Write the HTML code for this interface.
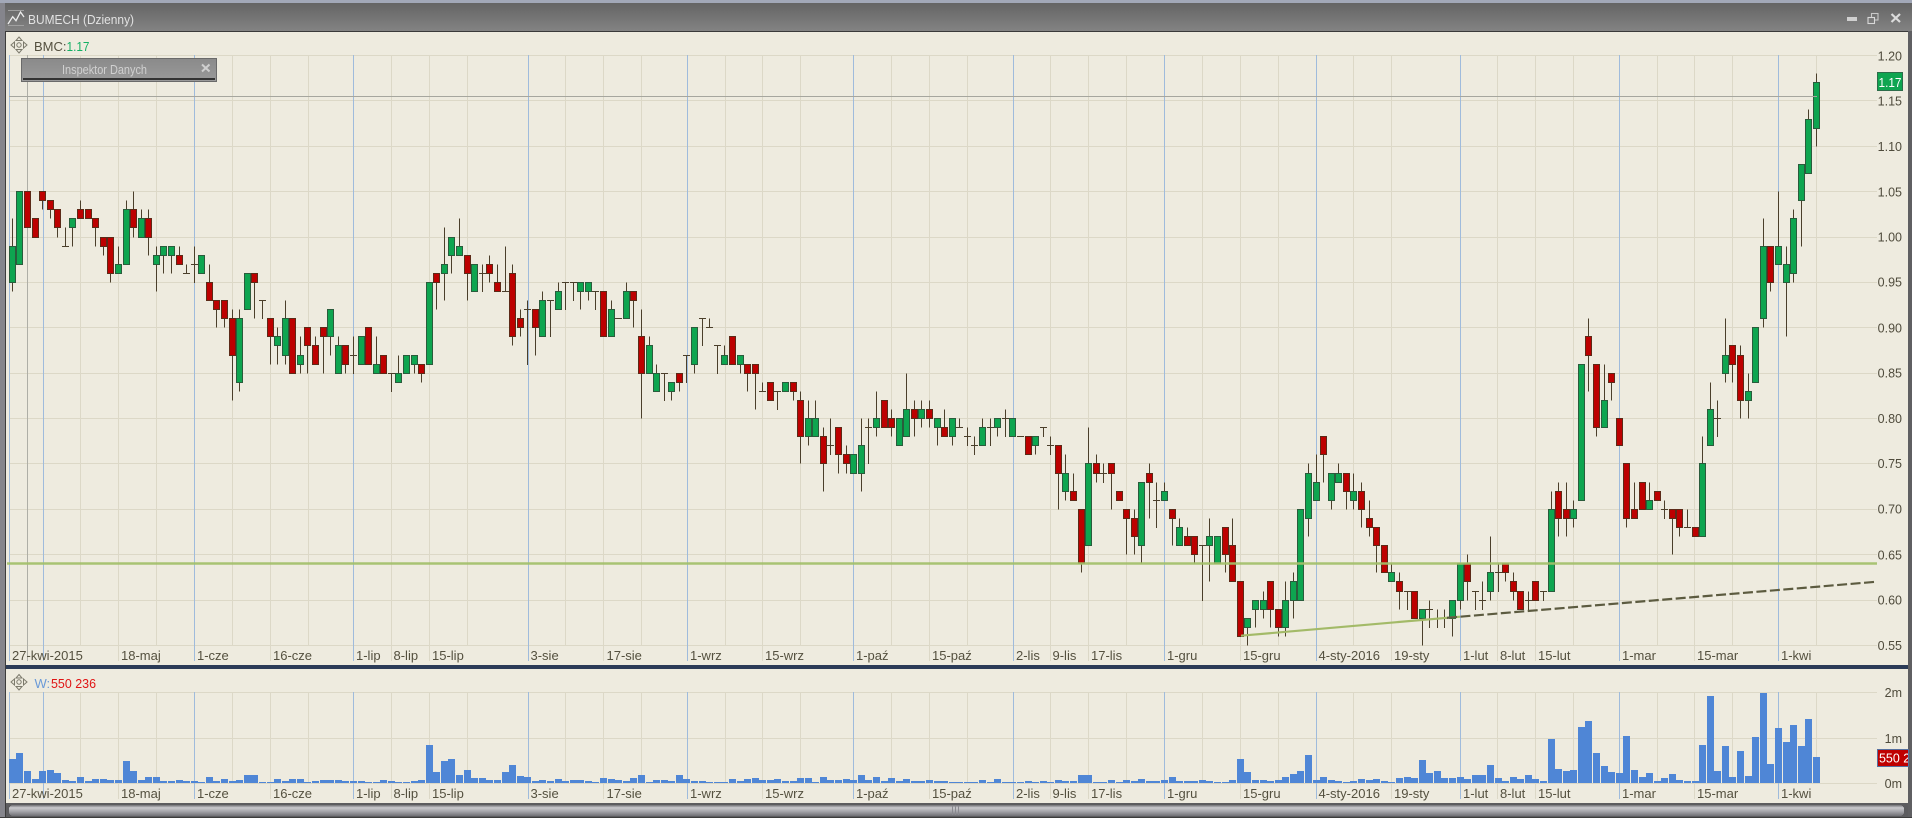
<!DOCTYPE html>
<html lang="pl">
<head>
<meta charset="utf-8">
<title>BUMECH (Dzienny)</title>
<style>
html,body{margin:0;padding:0;background:#6a6a6a;width:1912px;height:818px;overflow:hidden}
svg{display:block}
text{font-family:"Liberation Sans",sans-serif;font-size:13px;fill:#54503f}
.p{font-size:12.5px;text-anchor:end;fill:#4f4b3c}
.w{fill:#ffffff}
</style>
</head>
<body>
<svg xmlns="http://www.w3.org/2000/svg" width="1912" height="818" viewBox="0 0 1912 818" shape-rendering="crispEdges">
<defs>
<linearGradient id="tb" x1="0" y1="0" x2="0" y2="1"><stop offset="0" stop-color="#646464"/><stop offset="1" stop-color="#838383"/></linearGradient>
<linearGradient id="sb" x1="0" y1="0" x2="0" y2="1"><stop offset="0" stop-color="#6f6f73"/><stop offset=".25" stop-color="#c9c9cd"/><stop offset=".55" stop-color="#a9a9ae"/><stop offset="1" stop-color="#707075"/></linearGradient>
<linearGradient id="ib" x1="0" y1="0" x2="0" y2="1"><stop offset="0" stop-color="#8a8a8a"/><stop offset="1" stop-color="#9a9a9a"/></linearGradient>
<clipPath id="rc"><rect x="1877" y="748" width="31" height="20"/></clipPath>
</defs>
<!-- window frame -->
<rect width="1912" height="818" fill="#6a6a6e"/>
<rect x="0" y="0" width="1912" height="3" fill="#a2a8b8"/>
<rect x="0" y="3" width="1912" height="28" fill="url(#tb)"/>
<rect x="0" y="31" width="1912" height="1" fill="#3a3a3a"/>
<rect x="0" y="3" width="5" height="815" fill="#85858c"/>
<rect x="5" y="31" width="1" height="787" fill="#3c3c3c"/>
<rect x="1908" y="31" width="4" height="787" fill="#5f5f62"/>
<rect x="6" y="32" width="1902" height="771" fill="#eeebdf"/>
<!-- pane separator -->
<rect x="6" y="665" width="1902" height="4" fill="#2b3b57"/>
<!-- scrollbar -->
<rect x="6" y="803" width="1902" height="15" fill="#5c5c5f"/>
<rect x="9" y="805" width="1895" height="11" rx="4" fill="url(#sb)"/>
<g fill="#8a8a90"><rect x="952" y="806" width="1" height="9"/><rect x="955" y="806" width="1" height="9"/><rect x="958" y="806" width="1" height="9"/></g>
<rect x="0" y="817" width="1912" height="1" fill="#3c3c3c"/>

<g id="grid"></g>
<g id="vol"></g>
<g id="cand"></g>

<!-- overlay lines -->
<g shape-rendering="auto">
<line x1="9" y1="96.5" x2="1817" y2="96.5" stroke="#a6a69e" stroke-width="1" shape-rendering="crispEdges"/>
<line x1="7" y1="563.5" x2="1877" y2="563.5" stroke="#a3c06a" stroke-width="2.5" opacity=".92"/>
<line x1="1241" y1="635.7" x2="1460" y2="616.7" stroke="#a3ba68" stroke-width="2.2"/>
<line x1="1447" y1="617.8" x2="1877" y2="581.7" stroke="#5c5b40" stroke-width="2.2" stroke-dasharray="10 3.5"/>
</g>

<!-- title bar -->
<g shape-rendering="auto">
<path d="M8 10.5H24M8 25.5H24" stroke="#a0a0a0" stroke-width="1" fill="none"/>
<path d="M8 24L12.7 16.7L16 20.7L20.5 12L24 17" stroke="#eeeeee" stroke-width="1.3" fill="none"/>
<rect x="1847" y="17" width="10" height="4" fill="#d0d0d0"/>
<rect x="1871.5" y="13.5" width="6.5" height="6.5" fill="none" stroke="#c8c8c8" stroke-width="1.1"/>
<rect x="1868" y="17.5" width="6.5" height="6" fill="#7a7a7a" stroke="#d8d8d8" stroke-width="1.1"/>
<path d="M1891.5 14L1900 22M1900 14L1891.5 22" stroke="#dcdcdc" stroke-width="2.2"/>
</g>
<text x="28" y="24" style="fill:#e2e2e2;font-size:13px" textLength="106" lengthAdjust="spacingAndGlyphs">BUMECH (Dzienny)</text>

<!-- pane headers -->
<g fill="none" stroke="#7c7a6c" stroke-width="1" shape-rendering="auto">
<circle cx="19" cy="45" r="2.2"/><path d="M19 37l3 3.5h-6zM19 53l3-3.5h-6zM11 45l3.5-3v6zM27 45l-3.5-3v6z"/>
</g>
<g fill="none" stroke="#7c7a6c" stroke-width="1" shape-rendering="auto">
<circle cx="19" cy="682" r="2.2"/><path d="M19 674.5l3 3.5h-6zM19 690l3-3.5h-6zM11 682l3.5-3v6zM27 682l-3.5-3v6z"/>
</g>
<text x="34" y="51">BMC:</text>
<text x="66.5" y="51" style="fill:#14b064" textLength="23" lengthAdjust="spacingAndGlyphs">1.17</text>
<text x="34.5" y="688" style="fill:#6a9ad8">W:</text>
<text x="51" y="688" style="fill:#e01414" textLength="45" lengthAdjust="spacingAndGlyphs">550 236</text>

<!-- inspector -->
<rect x="21.5" y="58.5" width="195" height="23" fill="url(#ib)" stroke="#6a6a6a" stroke-width="1"/>
<rect x="23" y="78" width="192" height="2" fill="#333333"/>
<text x="62" y="74" style="fill:#d0d0d0;font-size:12.5px" textLength="85" lengthAdjust="spacingAndGlyphs">Inspektor Danych</text>
<path d="M202 64.5L209.5 71.5M209.5 64.5L202 71.5" stroke="#cfcfcf" stroke-width="2" shape-rendering="auto"/>

<!-- price axis -->
<text class="p" x="1902" y="60.5">1.20</text>
<text class="p" x="1902" y="105.5">1.15</text>
<text class="p" x="1902" y="151">1.10</text>
<text class="p" x="1902" y="196.5">1.05</text>
<text class="p" x="1902" y="241.5">1.00</text>
<text class="p" x="1902" y="286.5">0.95</text>
<text class="p" x="1902" y="332.5">0.90</text>
<text class="p" x="1902" y="377.5">0.85</text>
<text class="p" x="1902" y="423">0.80</text>
<text class="p" x="1902" y="468">0.75</text>
<text class="p" x="1902" y="513.5">0.70</text>
<text class="p" x="1902" y="559.5">0.65</text>
<text class="p" x="1902" y="604.5">0.60</text>
<text class="p" x="1902" y="650">0.55</text>
<rect x="1877.5" y="72.5" width="25" height="18" fill="#0ea550" stroke="#2d6c4a"/>
<text class="w" x="1878.5" y="87" textLength="23" lengthAdjust="spacingAndGlyphs">1.17</text>

<!-- volume axis -->
<text class="p" x="1902" y="697">2m</text>
<text class="p" x="1902" y="743">1m</text>
<text class="p" x="1902" y="788">0m</text>
<rect x="1877.5" y="749.5" width="31" height="17" fill="#bf0000" stroke="#56709f"/>
<g clip-path="url(#rc)"><text class="w" x="1879" y="762.5" textLength="45" lengthAdjust="spacingAndGlyphs">550 236</text></g>

<!-- date axis price pane -->
<text x="12" y="660">27-kwi-2015</text>
<text x="121" y="660">18-maj</text>
<text x="197" y="660">1-cze</text>
<text x="273" y="660">16-cze</text>
<text x="356" y="660">1-lip</text>
<text x="393.5" y="660">8-lip</text>
<text x="432" y="660">15-lip</text>
<text x="530.5" y="660">3-sie</text>
<text x="606.5" y="660">17-sie</text>
<text x="690" y="660">1-wrz</text>
<text x="765" y="660">15-wrz</text>
<text x="856" y="660">1-paź</text>
<text x="932" y="660">15-paź</text>
<text x="1016" y="660">2-lis</text>
<text x="1052.5" y="660">9-lis</text>
<text x="1091" y="660">17-lis</text>
<text x="1167" y="660">1-gru</text>
<text x="1243" y="660">15-gru</text>
<text x="1318.5" y="660">4-sty-2016</text>
<text x="1394" y="660">19-sty</text>
<text x="1463" y="660">1-lut</text>
<text x="1500" y="660">8-lut</text>
<text x="1538" y="660">15-lut</text>
<text x="1622" y="660">1-mar</text>
<text x="1697" y="660">15-mar</text>
<text x="1781" y="660">1-kwi</text>

<!-- date axis volume pane -->
<text x="12" y="798">27-kwi-2015</text>
<text x="121" y="798">18-maj</text>
<text x="197" y="798">1-cze</text>
<text x="273" y="798">16-cze</text>
<text x="356" y="798">1-lip</text>
<text x="393.5" y="798">8-lip</text>
<text x="432" y="798">15-lip</text>
<text x="530.5" y="798">3-sie</text>
<text x="606.5" y="798">17-sie</text>
<text x="690" y="798">1-wrz</text>
<text x="765" y="798">15-wrz</text>
<text x="856" y="798">1-paź</text>
<text x="932" y="798">15-paź</text>
<text x="1016" y="798">2-lis</text>
<text x="1052.5" y="798">9-lis</text>
<text x="1091" y="798">17-lis</text>
<text x="1167" y="798">1-gru</text>
<text x="1243" y="798">15-gru</text>
<text x="1318.5" y="798">4-sty-2016</text>
<text x="1394" y="798">19-sty</text>
<text x="1463" y="798">1-lut</text>
<text x="1500" y="798">8-lut</text>
<text x="1538" y="798">15-lut</text>
<text x="1622" y="798">1-mar</text>
<text x="1697" y="798">15-mar</text>
<text x="1781" y="798">1-kwi</text>
</svg>
<script>
(function(){
var NS="http://www.w3.org/2000/svg";
function el(parent,n,a){var e=document.createElementNS(NS,n);for(var k in a)e.setAttribute(k,a[k]);parent.appendChild(e);return e;}
function Y(c){return 55.5+(120-c)*9.077;}
function YP(c){return Math.round(Y(c)-0.5)+0.5;}
function X(i){return Math.round(12.33+7.58*i-0.5)+0.5;}
var grid=document.getElementById("grid"),cand=document.getElementById("cand"),vol=document.getElementById("vol");
var GC="#dcd8c7",BC="#9fbbdc";
var blue=[9.5,43.5,194.5,353.5,528.5,687.5,853.5,1013.5,1164.5,1316.5,1460.5,1619.5,1778.5];
var grey=[80.5,118.5,156.5,232.5,270.5,308.5,391.5,429.5,467.5,565.5,603.5,641.5,725.5,762.5,800.5,891.5,929.5,967.5,1050.5,1088.5,1126.5,1202.5,1240.5,1278.5,1353.5,1391.5,1497.5,1535.5,1573.5,1657.5,1694.5,1732.5,1816.5];
var ticks=[118.5,270.5,391.5,429.5,603.5,762.5,929.5,1050.5,1088.5,1240.5,1391.5,1497.5,1535.5,1694.5];
var i,p;
// horizontal
for(i=0;i<14;i++){p=Math.round(Y(120-5*i)-.5)+.5;el(grid,"line",{x1:9,x2:1877,y1:p,y2:p,stroke:GC});}
[692.5,738.5,783.5].forEach(function(y){el(grid,"line",{x1:9,x2:1877,y1:y,y2:y,stroke:GC});});
// vertical
grey.forEach(function(x){
 el(grid,"line",{x1:x,x2:x,y1:55,y2:645,stroke:GC});
 el(grid,"line",{x1:x,x2:x,y1:692,y2:783,stroke:GC});
});
ticks.forEach(function(x){
 el(grid,"line",{x1:x,x2:x,y1:645,y2:661,stroke:GC});
 el(grid,"line",{x1:x,x2:x,y1:783,y2:799,stroke:GC});
});
blue.forEach(function(x){
 el(grid,"line",{x1:x,x2:x,y1:55,y2:661,stroke:BC});
 el(grid,"line",{x1:x,x2:x,y1:692,y2:799,stroke:BC});
});
el(grid,"line",{x1:27.5,x2:27.5,y1:55,y2:661,stroke:"#aeaea6"});

var data="G99 95 102 94,G105 97,R105 101,R102 100,R105 104 105 103,R104 103 104 102,R103 101 103 100,D99 101 99,G102 101 102 99,R103 102 104 102,R103 102,R102 101 102 99,R100 99 100 98,R100 96 100 95,G97 96 99 96,G103 97 104 97,R103 101 105 100,G102 100 103 100,R102 100 103 98,G98 97 99 94,G99 98 99 96,G99 98 99 96,R98 97 99 97,D96 97 96,D97 99 95,G98 96,R95 93 97 93,R93 92 93 90,R93 91 93 90,R91 87 92 82,G91 84 92 83,G96 92,R96 95 96 91,D93 93 91,R91 89 91 86,G89 88 90 86,G91 87 93 86,R91 85,G87 86 89 85,R90 88 90 85,R88 86 89 86,R90 89 90 85,G92 89 92 87,G88 85 89 85,R88 86 88 85,D87 89 85,G89 86,R90 86,G86 85 89 85,R87 85,D85 85 83,G85 84 87 84,G87 85,G87 86 87 85,R86 85 86 84,G95 86,R96 95 96 92,G97 96 101 93,G100 98 100 96,G99 98 102 98,R98 96 98 93,G97 94,D96 97 94,R97 96 98 95,R95 94 97 94,D94 99 94,R96 89 97 88,R91 90 92 89,D92 93 86,R92 90 92 87,G93 89 94 89,D93 93 89,G94 92 95 92,D95 95 92,D95 95 93,G95 94 95 92,G95 94 95 93,D94 94 92,R94 89,G92 89 93 89,D91 91 91,G94 91 95 91,R94 93 94 90,R89 85 92 80,G88 85 89 85,G85 83 86 83,D85 85 82,G84 83 84 82,R85 84 85 83,D87 87 84,G90 86 90 85,D91 91 88,D90 91 90,D88 88 85,G87 86 88 86,R89 86,G87 86 87 85,R86 85 86 83,R86 85 86 81,D83 84 83,R84 82,D83 83 81,G84 83,R84 83 84 82,R82 78 83 75,G80 78 82 77,G80 78 82 78,R78 75 79 72,D77 80 76,R79 76 79 74,R76 75 77 74,G76 74,G77 74 80 72,D79 80 75,G80 79 83 78,R82 79,R80 79 81 78,G80 77,G81 78 85 78,R81 80 82 78,G81 80 82 79,R81 80 82 79,G80 79 80 77,R79 78 81 78,G80 78 80 77,D79 80 79,D78 79 77,D77 78 76,G79 77 80 77,D79 80 77,G80 79 80 78,D80 81 78,G80 78,D78 78 78,R78 76,G78 77 78 76,D79 79 78,D77 78 76,R77 74 77 70,G74 72 76 71,R72 71 74 71,R70 64 70 63,G75 66 79 66,R75 74 76 73,D74 75 73,R75 74 75 70,R72 71,R70 69 70 65,R69 67 70 65,G73 66 73 64,R74 73 75 69,D71 73 68,G72 71 73 71,R70 69 70 66,G68 66 69 66,R67 66 68 66,R67 65 67 64,D66 66 60,G67 66 69 62,G67 64,R68 65 68 63,R66 62 69 62,R62 56,G58 57 58 55,G60 59 60 57,G60 59 61 58,R62 59 62 57,R59 57 59 56,G60 57 62 56,G62 60 63 58,G70 60,G74 69 75 67,G73 71 76 71,R78 76 78 73,G74 71 74 70,G74 73 75 73,R74 72 74 70,G72 71 74 70,R72 70 73 68,R69 68 71 67,R68 66 68 63,R66 63,G63 62 64 62,R62 61 63 59,D61 61 59,R61 58,G59 58 59 55,D59 60 57,D58 59 57,D58 59 57,G60 58 60 56,G64 60 64 59,R64 62 65 60,D61 61 59,D60 62 59,G63 61 67 60,D63 64 61,R64 63 64 62,R62 61 63 60,R61 59,D60 61 59,R62 60,D61 61 60,G70 61 72 61,R72 69 73 67,R70 69 73 67,G70 69 71 68,G86 71,R89 87 91 83,R86 79 86 78,G82 79 86 79,R85 84 85 82,R80 77,R75 69 75 68,R70 69 73 69,R73 70,G71 70 73 70,R72 71,D70 71 69,R70 69 70 65,R70 68 70 67,D68 70 68,R68 67,G75 67 78 67,G81 77 84 77,D80 82 78,G87 85 91 84,R88 86 88 84,R87 82 88 80,G83 82 85 80,G90 84,G99 91 102 90,R99 95 99 94,G99 97 105 97,G97 95 99 89,G102 96 103 95,G108 104 108 99,G113 107 114 107,G117 112 118 110".split(",");
var W="#4b3f2b";
data.forEach(function(s,i){
 var t=s[0],n=s.slice(1).split(" ").map(Number),x=X(i);
 if(t==="D"){
  var y=YP(n[0]);
  if(n[1]!==n[2])el(cand,"line",{x1:x,x2:x,y1:YP(n[1]),y2:YP(n[2])+.5,stroke:W});
  el(cand,"line",{x1:x-3.5,x2:x+3.5,y1:y,y2:y,stroke:W});
 }else{
  var top=n[0],bot=n[1],hi=n.length>2?n[2]:top,lo=n.length>3?n[3]:bot;
  if(hi!==lo)el(cand,"line",{x1:x,x2:x,y1:YP(hi),y2:YP(lo),stroke:W});
  el(cand,"rect",{x:x-3,y:YP(top),width:6,height:YP(bot)-YP(top),fill:t==="G"?"#0ea550":"#bd0000",stroke:t==="G"?"#2a5c3c":"#5c2a18"});
 }
});
var v=[24,30,12,4,12,13,10,3,2,6,2,4,4,3,3,22,12,3,6,6,2,2,3,2,2,1,6,2,4,2,3,8,8,1,1,4,2,4,4,1,2,3,3,3,2,2,2,1,1,3,2,1,1,2,3,38,11,22,24,8,13,5,5,3,3,11,18,7,6,2,3,2,4,2,3,3,2,1,5,4,3,2,5,8,1,3,3,2,8,4,2,2,1,1,1,4,2,4,5,3,3,4,2,2,5,5,1,6,3,3,4,3,8,3,6,2,5,2,4,2,2,3,2,2,1,1,1,1,3,1,4,1,1,1,2,1,2,1,3,2,2,8,8,1,1,3,1,3,2,4,2,2,3,6,2,2,2,3,2,1,1,3,24,11,3,3,2,3,6,9,12,28,3,6,3,2,1,2,4,3,4,2,1,5,6,5,23,10,12,5,5,6,4,8,8,18,5,2,6,4,8,4,2,44,14,12,13,56,62,30,17,11,10,47,13,6,10,2,5,9,3,2,2,38,87,12,37,6,32,7,46,90,19,55,41,58,37,64,26];
v.forEach(function(h,i){
 var x=X(i)-.5;
 el(vol,"rect",{x:x-3,y:783-h,width:7,height:h,fill:"#4f86d6"});
});
})();
</script>
</body>
</html>
